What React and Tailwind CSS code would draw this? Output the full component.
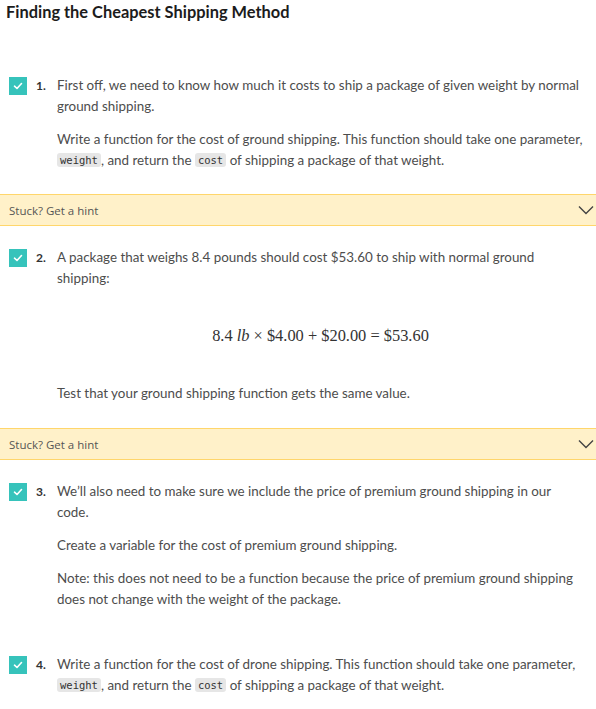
import React from 'react';

const Code = ({ children }) => (
  <code className="rounded-[3px] bg-[#e6e6e6] px-[3px] py-[1px] align-[1px] font-['DejaVu_Sans_Mono',monospace] text-[10.5px] leading-none text-[#333]">
    {children}
  </code>
);

const Check = () => (
  <div className="mt-[2px] flex h-[18px] w-[18px] shrink-0 items-center justify-center bg-[#36c3bb]">
    <svg width="10" height="8" viewBox="0 0 10 8" fill="none">
      <path d="M1.5 4.2 L4 6.5 L8.5 1.5" stroke="white" strokeWidth="1.6" strokeLinecap="round" strokeLinejoin="round" />
    </svg>
  </div>
);

const Task = ({ n, children, className = '' }) => (
  <div className={`flex pl-[9px] pr-[12px] ${className}`}>
    <Check />
    <span className="ml-[9px] w-[21px] shrink-0 text-[12px] font-bold text-[#333]">{n}.</span>
    <div className="flex flex-col gap-[12px]">{children}</div>
  </div>
);

const Hint = () => (
  <div className="flex h-[32px] items-center justify-between border-y border-[#ffd66b] bg-[#fff1c9] pl-[9px] pr-[2px]">
    <span className="font-['Open_Sans',sans-serif] text-[11.5px] text-[#555]">Stuck? Get a hint</span>
    <svg width="16" height="10" viewBox="0 0 16 10" fill="none">
      <path d="M1 1.5 L8 8.5 L15 1.5" stroke="#444" strokeWidth="1.4" />
    </svg>
  </div>
);

export default function App() {
  return (
    <div className="h-[709px] w-[596px] overflow-hidden bg-white font-['Lato',sans-serif] text-[13.4px] leading-[21px] text-[#4d4d4d]">
      <h1 className="pl-[6px] pt-[2px] text-[16.4px] font-bold leading-[20px] text-[#1c1c1c]">
        Finding the Cheapest Shipping Method
      </h1>

      <Task n={1} className="mt-[53px] mb-[23px]">
        <p>First off, we need to know how much it costs to ship a package of given weight by normal ground shipping.</p>
        <p>
          Write a function for the cost of ground shipping. This function should take one parameter, <Code>weight</Code>, and
          return the <Code>cost</Code> of shipping a package of that weight.
        </p>
      </Task>

      <Hint />

      <Task n={2} className="mt-[21px] mb-[24px]">
        <p>A package that weighs 8.4 pounds should cost $53.60 to ship with normal ground shipping:</p>
        <p className="py-[24px] text-center font-['Liberation_Serif',serif] text-[16.4px] leading-[22px] text-[#333]">
          8.4 <i>lb</i> × $4.00 + $20.00 = $53.60
        </p>
        <p>Test that your ground shipping function gets the same value.</p>
      </Task>

      <Hint />

      <Task n={3} className="mt-[21px] mb-[44px]">
        <p>We’ll also need to make sure we include the price of premium ground shipping in our code.</p>
        <p>Create a variable for the cost of premium ground shipping.</p>
        <p>Note: this does not need to be a function because the price of premium ground shipping does not change with the weight of the package.</p>
      </Task>

      <Task n={4}>
        <p>
          Write a function for the cost of drone shipping. This function should take one parameter, <Code>weight</Code>, and
          return the <Code>cost</Code> of shipping a package of that weight.
        </p>
      </Task>
    </div>
  );
}
